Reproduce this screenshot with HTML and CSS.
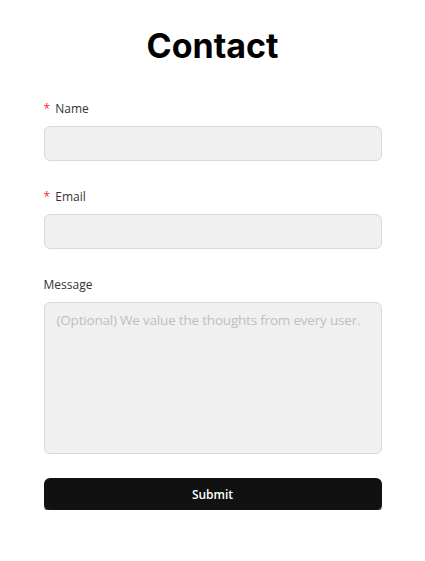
FILE: index.html
```html
<!DOCTYPE html>
<html lang="en">
<head>
    <meta charset="UTF-8">
    <meta name="viewport" content="width=device-width, initial-scale=1.0">
    <title>Contact</title>
    <link rel="stylesheet" href="styles.css">
</head>
<body>
    <div class="page">
        <h1>Contact</h1>
        <form class="contact-form">
            <div class="field">
                <label for="name"><span class="req">*</span> Name</label>
                <input type="text" id="name">
            </div>
            <div class="field">
                <label for="email"><span class="req">*</span> Email</label>
                <input type="email" id="email">
            </div>
            <div class="field">
                <label for="message">Message</label>
                <textarea id="message" placeholder="(Optional) We value the thoughts from every user."></textarea>
            </div>
            <button type="submit">Submit</button>
        </form>
    </div>
</body>
</html>
```

FILE: styles.css
```css
body {
    margin: 0;
    padding: 0;
    font-family: "Open Sans", "Noto Sans", sans-serif;
    background: #fff;
    color: #333;
}

.page {
    width: 338px;
    margin: 0 auto;
    padding-top: 23px;
}

.page h1 {
    margin: 0 0 31px;
    text-align: center;
    font-family: "Inter", sans-serif;
    font-size: 34px;
    font-weight: 700;
    line-height: 46px;
    color: #000;
}

.field {
    display: flex;
    flex-direction: column;
    gap: 8px;
    margin-bottom: 27px;
}

.field label {
    font-size: 12px;
    line-height: 18px;
    color: #333;
}

.req {
    color: #f5222d;
    margin-right: 2px;
}

input, textarea {
    box-sizing: border-box;
    width: 100%;
    padding: 6px 12px;
    font-family: inherit;
    font-size: 13.5px;
    background: #f0f0f0;
    border: 1px solid #d9d9d9;
    border-radius: 6px;
    outline: none;
}

input {
    height: 35px;
}

textarea {
    height: 152px;
    resize: none;
    line-height: 22px;
    letter-spacing: -0.2px;
}

textarea::placeholder {
    color: #bfbfbf;
}

button {
    display: block;
    width: 100%;
    height: 32px;
    margin-top: -3px;
    border: none;
    border-radius: 6px;
    background: #111;
    color: #fff;
    font-family: inherit;
    font-size: 12px;
    font-weight: 600;
    cursor: pointer;
    box-shadow: 0 2px 0 #555;
}
```
